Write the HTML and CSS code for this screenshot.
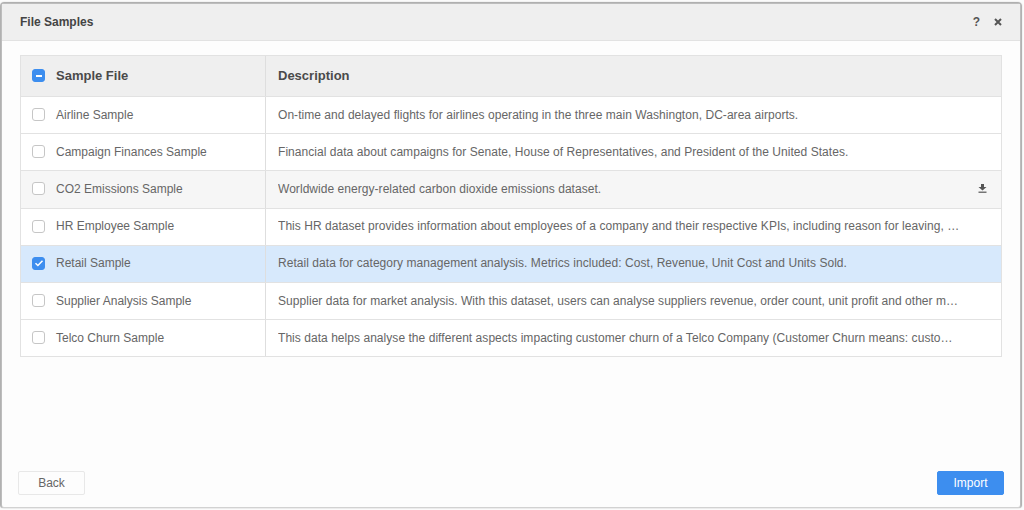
FILE: index.html
```html
<!DOCTYPE html>
<html lang="en">
<head>
<meta charset="utf-8">
<title>File Samples</title>
<link rel="stylesheet" href="styles.css">
</head>
<body>
<div class="dialog">
  <header class="dialog-head">
    <h1 class="dialog-title">File Samples</h1>
    <div class="head-tools">
      <span class="tool">?</span>
      <svg class="tool-x" width="8" height="8" viewBox="0 0 8 8"><path d="M1 1l6 6M7 1l-6 6" stroke="#555" stroke-width="2" fill="none"/></svg>
    </div>
  </header>
  <main class="dialog-body">
    <div class="table">
      <div class="row row-head">
        <div class="cell cell-name"><span class="check check-on"><svg width="14" height="14" viewBox="0 0 14 14"><path d="M4 7h6" stroke="#fff" stroke-width="2"/></svg></span><span>Sample File</span></div>
        <div class="cell cell-desc">Description</div>
      </div>
      <div class="row">
        <div class="cell cell-name"><span class="check"></span><span>Airline Sample</span></div>
        <div class="cell cell-desc"><span class="desc-text">On-time and delayed flights for airlines operating in the three main Washington, DC-area airports.</span></div>
      </div>
      <div class="row">
        <div class="cell cell-name"><span class="check"></span><span>Campaign Finances Sample</span></div>
        <div class="cell cell-desc"><span class="desc-text">Financial data about campaigns for Senate, House of Representatives, and President of the United States.</span></div>
      </div>
      <div class="row row-hover">
        <div class="cell cell-name"><span class="check"></span><span>CO2 Emissions Sample</span></div>
        <div class="cell cell-desc"><span class="desc-text">Worldwide energy-related carbon dioxide emissions dataset.</span>
          <svg class="download" width="9" height="9" viewBox="0 0 9 9"><path d="M3 0h3v3h2.500L4.500 6.500 0.500 3H3z" fill="#555"/><path d="M0.500 7.600h8v1.200h-8z" fill="#555"/></svg>
        </div>
      </div>
      <div class="row">
        <div class="cell cell-name"><span class="check"></span><span>HR Employee Sample</span></div>
        <div class="cell cell-desc"><span class="desc-text">This HR dataset provides information about employees of a company and their respective KPIs, including reason for leaving, and more details about each of them</span></div>
      </div>
      <div class="row row-selected">
        <div class="cell cell-name"><span class="check check-on"><svg width="14" height="14" viewBox="0 0 14 14"><path d="M3.500 7.200l2.400 2.300 4.600-4.800" stroke="#fff" stroke-width="1.500" fill="none"/></svg></span><span>Retail Sample</span></div>
        <div class="cell cell-desc"><span class="desc-text">Retail data for category management analysis. Metrics included: Cost, Revenue, Unit Cost and Units Sold.</span></div>
      </div>
      <div class="row">
        <div class="cell cell-name"><span class="check"></span><span>Supplier Analysis Sample</span></div>
        <div class="cell cell-desc"><span class="desc-text">Supplier data for market analysis. With this dataset, users can analyse suppliers revenue, order count, unit profit and other metrics across regions</span></div>
      </div>
      <div class="row">
        <div class="cell cell-name"><span class="check"></span><span>Telco Churn Sample</span></div>
        <div class="cell cell-desc"><span class="desc-text">This data helps analyse the different aspects impacting customer churn of a Telco Company (Customer Churn means: customers leaving the company)</span></div>
      </div>
    </div>
  </main>
  <footer class="dialog-foot">
    <button class="btn" type="button">Back</button>
    <button class="btn btn-primary" type="button">Import</button>
  </footer>
</div>
</body>
</html>
```
FILE: styles.css
```css
* { box-sizing: border-box; }
html, body { height: 100%; }
body {
  margin: 0;
  padding: 3px 3px 2px 1px;
  background: #fbfbfb;
  font-family: "Liberation Sans", Arial, sans-serif;
  color: #666;
  overflow: hidden;
}
.dialog {
  height: 505px;
  display: flex;
  flex-direction: column;
  background: #fdfdfd;
  border: 1px solid #bdbdbd;
  border-bottom-color: #d2d2d2;
  border-radius: 3px;
  box-shadow: -1px 0 1px #aaa, 1px 0 1px #aaa, 0 -1px 1px #aaa;
}
.dialog-head {
  height: 37px;
  flex: none;
  display: flex;
  align-items: center;
  justify-content: space-between;
  padding: 0 18px 0 18px;
  background: #efefef;
  border-bottom: 1px solid #e2e2e2;
}
.dialog-title { margin: 0; font-size: 12px; font-weight: 700; color: #444; }
.head-tools { display: flex; align-items: center; gap: 14px; }
.tool { font-size: 12px; font-weight: 700; color: #555; }
.dialog-body { flex: 1; padding: 14px 18px 0 18px; }
.table { border: 1px solid #e2e2e2; border-bottom: 0; }
.row { display: flex; height: 37.200px; border-bottom: 1px solid #e2e2e2; font-size: 12px; background: #fff; }
.row-head { height: 41px; background: #efefef; font-size: 13px; font-weight: 700; color: #4a4a4a; }
.row-hover { background: #f6f6f6; }
.row-selected { background: #d7e9fc; }
.cell { display: flex; align-items: center; min-width: 0; padding-bottom: 1px; }
.cell-name { width: 245px; flex: none; padding-left: 11px; gap: 11px; border-right: 1px solid #dedede; }
.cell-desc { flex: 1; padding: 0 40px 1px 12px; }
.row-hover .cell-desc { padding-right: 14px; justify-content: space-between; }
.desc-text { overflow: hidden; white-space: nowrap; text-overflow: ellipsis; letter-spacing: 0.045px; }
.check {
  width: 13px;
  height: 13px;
  flex: none;
  display: flex;
  align-items: center;
  justify-content: center;
  background: #fff;
  border: 1px solid #c6c6c6;
  border-radius: 3px;
}
.check-on { background: #3d8eef; border-color: #3d8eef; }
.check-on svg { flex: none; }
.download { flex: none; }
.dialog-foot { height: 36px; flex: none; display: flex; justify-content: space-between; align-items: flex-start; padding: 0 16px; }
.btn {
  width: 67px;
  height: 24px;
  padding: 0;
  font: 12px "Liberation Sans", Arial, sans-serif;
  color: #666;
  background: #fdfdfd;
  border: 1px solid #e8e8e8;
  border-radius: 2px;
}
.btn-primary { background: #3d8eef; border-color: #3d8eef; color: #fff; }
```
